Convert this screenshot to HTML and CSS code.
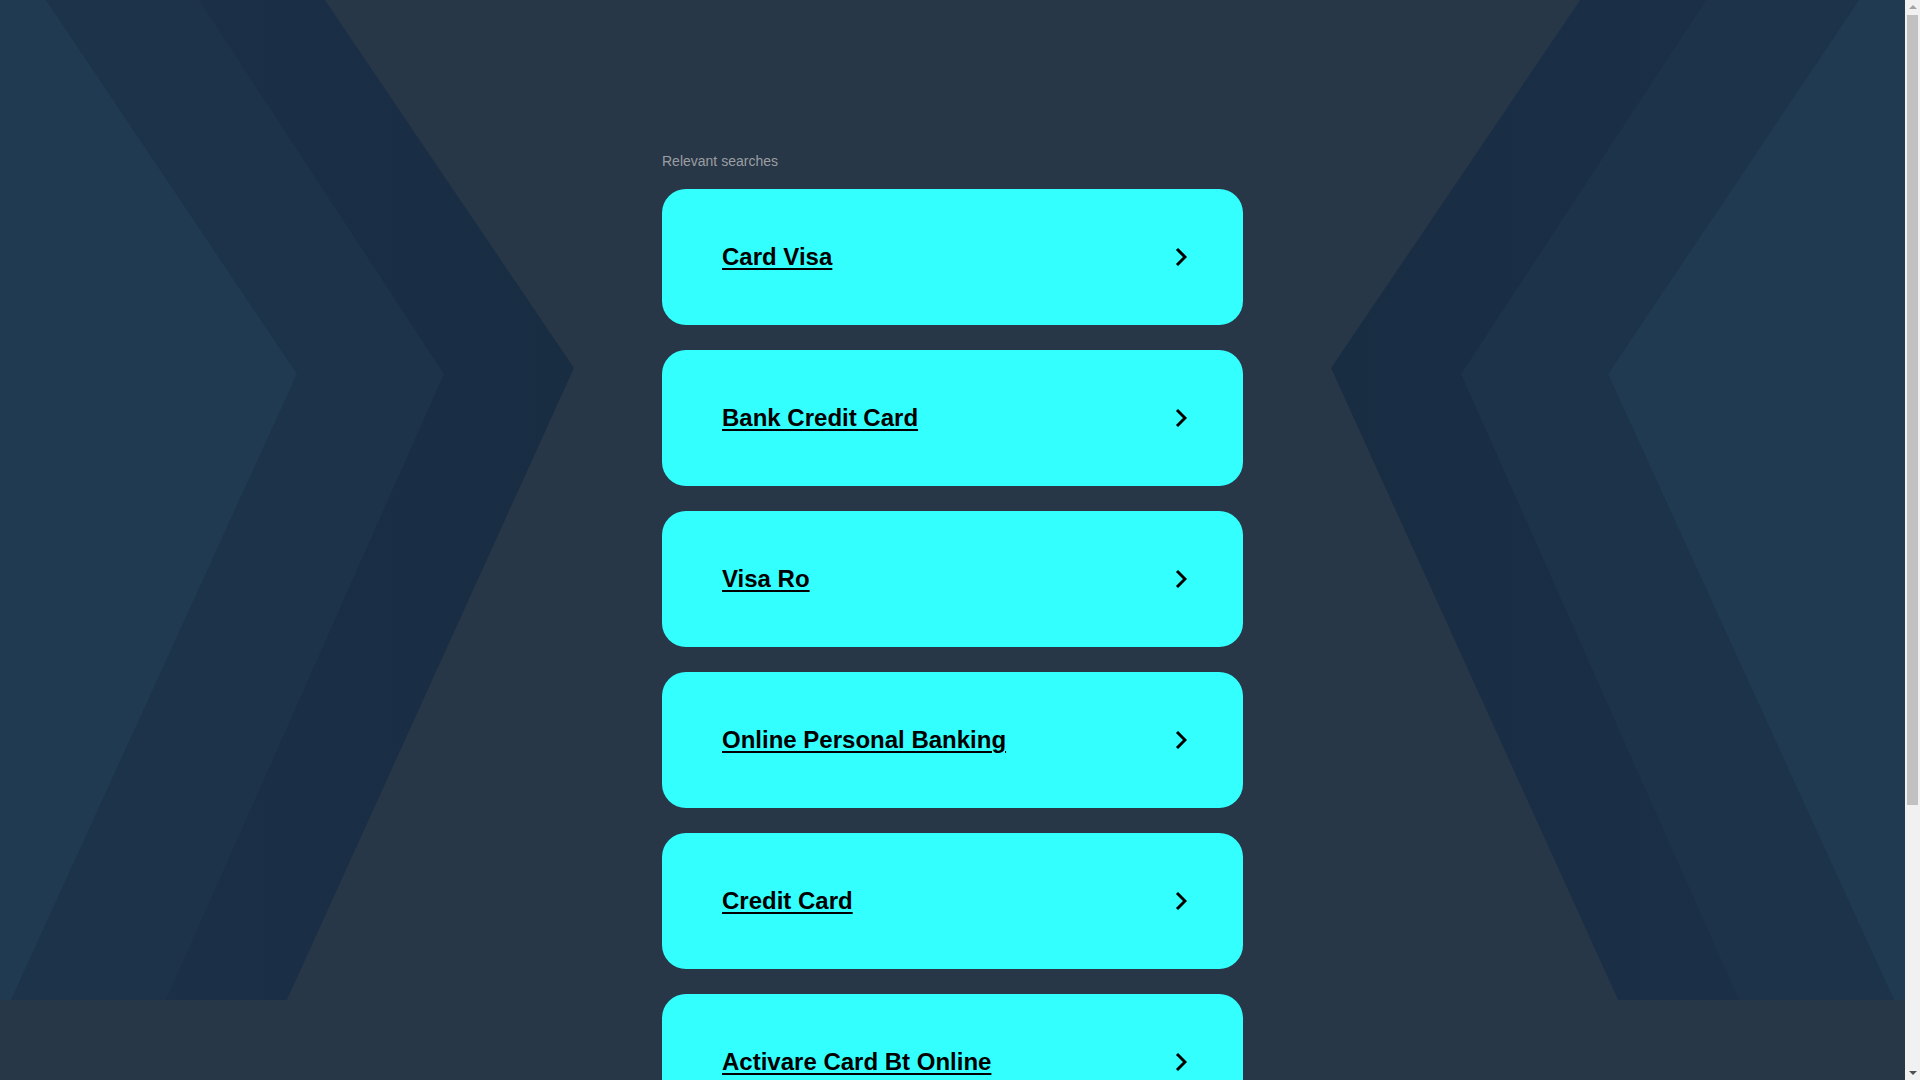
FILE: index.html
```html
<!DOCTYPE html>
<html lang="en">
<head>
<meta charset="utf-8">
<title>Relevant searches</title>
<link rel="stylesheet" href="styles.css">
</head>
<body>
<div class="page">
  <div class="backdrop" aria-hidden="true">
    <svg class="deco deco-left" width="600" height="1000" viewBox="0 0 600 1000">
      <defs>
        <linearGradient id="gOuter" x1="0" y1="0" x2="1" y2="0">
          <stop offset="0" stop-color="#1c3249"/>
          <stop offset="1" stop-color="#182c42"/>
        </linearGradient>
      </defs>
      <polygon points="0,0 325,0 574,368 287,1000 0,1000" fill="url(#gOuter)"/>
      <polygon points="0,0 199,0 444,374 166,1000 0,1000" fill="#1d3349"/>
      <polygon points="0,0 46,0 297,374 11,1000 0,1000" fill="#1f3a51"/>
    </svg>
    <svg class="deco deco-right" width="600" height="1000" viewBox="0 0 600 1000">
      <defs>
        <linearGradient id="gOuterR" x1="0" y1="0" x2="1" y2="0">
          <stop offset="0" stop-color="#1c3249"/>
          <stop offset="1" stop-color="#182c42"/>
        </linearGradient>
      </defs>
      <polygon points="0,0 325,0 574,368 287,1000 0,1000" fill="url(#gOuterR)"/>
      <polygon points="0,0 199,0 444,374 166,1000 0,1000" fill="#1d3349"/>
      <polygon points="0,0 46,0 297,374 11,1000 0,1000" fill="#1f3a51"/>
    </svg>
  </div>
  <main class="content">
    <p class="label">Relevant searches</p>
    <ul class="list">
      <li><a class="item" href="#"><span class="item-text">Card Visa</span><svg class="chev" width="12" height="20" viewBox="0 0 12 20"><polyline points="2,2 10,10 2,18" fill="none" stroke="#000" stroke-width="3"/></svg></a></li>
      <li><a class="item" href="#"><span class="item-text">Bank Credit Card</span><svg class="chev" width="12" height="20" viewBox="0 0 12 20"><polyline points="2,2 10,10 2,18" fill="none" stroke="#000" stroke-width="3"/></svg></a></li>
      <li><a class="item" href="#"><span class="item-text">Visa Ro</span><svg class="chev" width="12" height="20" viewBox="0 0 12 20"><polyline points="2,2 10,10 2,18" fill="none" stroke="#000" stroke-width="3"/></svg></a></li>
      <li><a class="item" href="#"><span class="item-text">Online Personal Banking</span><svg class="chev" width="12" height="20" viewBox="0 0 12 20"><polyline points="2,2 10,10 2,18" fill="none" stroke="#000" stroke-width="3"/></svg></a></li>
      <li><a class="item" href="#"><span class="item-text">Credit Card</span><svg class="chev" width="12" height="20" viewBox="0 0 12 20"><polyline points="2,2 10,10 2,18" fill="none" stroke="#000" stroke-width="3"/></svg></a></li>
      <li><a class="item" href="#"><span class="item-text">Activare Card Bt Online</span><svg class="chev" width="12" height="20" viewBox="0 0 12 20"><polyline points="2,2 10,10 2,18" fill="none" stroke="#000" stroke-width="3"/></svg></a></li>
    </ul>
  </main>
</div>
<div class="scrollbar" aria-hidden="true">
  <span class="sb-arrow sb-up"></span>
  <span class="sb-thumb"></span>
  <span class="sb-arrow sb-down"></span>
</div>
</body>
</html>
```

FILE: styles.css
```css
html, body {
  margin: 0;
  padding: 0;
}

body {
  background: #283748;
  font-family: "Liberation Sans", Arial, sans-serif;
}

.page {
  position: relative;
  margin-right: 15px;
  min-height: 1440px;
}

.backdrop {
  position: absolute;
  top: 0;
  left: 0;
  right: 0;
  height: 1000px;
  overflow: hidden;
  z-index: 0;
}

.deco {
  position: absolute;
  top: 0;
  display: block;
}

.deco-left {
  left: 0;
}

.deco-right {
  right: 0;
  transform: scaleX(-1);
}

.content {
  position: relative;
  z-index: 1;
  width: 581px;
  margin: 0 auto;
  padding-top: 153px;
}

.label {
  margin: 0 0 20px 0;
  font-size: 14px;
  line-height: 16px;
  color: #9b9ea2;
}

.list {
  list-style: none;
  margin: 0;
  padding: 0;
  display: flex;
  flex-direction: column;
  gap: 25px;
}

.item {
  display: flex;
  align-items: center;
  justify-content: space-between;
  height: 136px;
  box-sizing: border-box;
  padding: 0 56px 0 60px;
  background: #33ffff;
  border-radius: 24px;
  color: #000;
  text-decoration: none;
}

.item-text {
  font-size: 24px;
  font-weight: bold;
  text-decoration: underline;
  text-decoration-thickness: 2px;
  text-underline-offset: 3px;
}

.chev {
  display: block;
  flex: none;
}

/* simulated browser scrollbar */
.scrollbar {
  position: fixed;
  top: 0;
  right: 0;
  width: 15px;
  height: 100vh;
  background: #f1f1f1;
  display: flex;
  flex-direction: column;
  align-items: center;
  z-index: 5;
}

.sb-arrow {
  flex: none;
  width: 0;
  height: 0;
  border-left: 4px solid transparent;
  border-right: 4px solid transparent;
}

.sb-up {
  margin: 5px 0 5px;
  border-bottom: 4px solid #a3a3a3;
}

.sb-down {
  margin: auto 0 5px;
  border-top: 4px solid #505050;
}

.sb-thumb {
  flex: none;
  width: 11px;
  height: 790px;
  margin-top: 1px;
  background: #c1c1c1;
}
```
